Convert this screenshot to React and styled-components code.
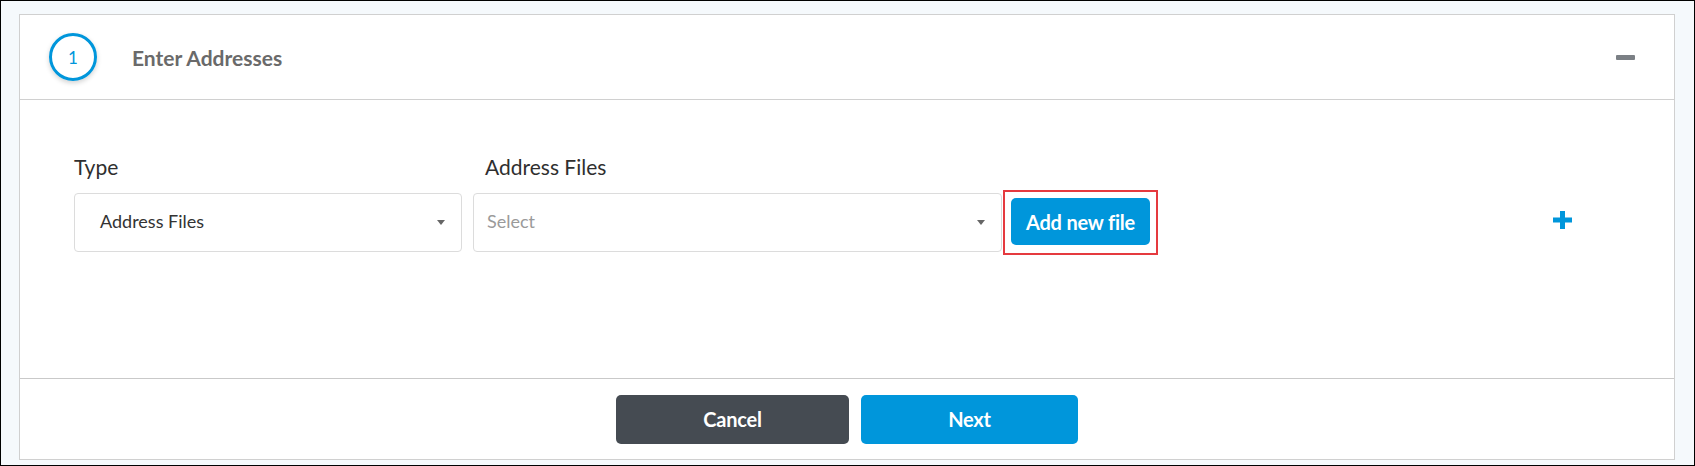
import styled, { createGlobalStyle } from "styled-components";

const GlobalStyle = createGlobalStyle`
  html, body {
    margin: 0;
    padding: 0;
    background: #f5f9fc;
  }
  body {
    font-family: Lato, "Open Sans", "Liberation Sans", sans-serif;
  }
  * {
    box-sizing: border-box;
  }
`;

const Page = styled.div`
  width: 1695px;
  height: 466px;
  border: 1px solid #000;
  background: #f5f9fc;
  padding: 13px 19px 5px 18px;
`;

const Card = styled.section`
  height: 100%;
  background: #fff;
  border: 1px solid #d0d0d0;
  display: flex;
  flex-direction: column;
`;

const Header = styled.header`
  height: 85px;
  flex: none;
  display: flex;
  align-items: center;
  padding: 0 39px 0 29px;
  border-bottom: 1px solid #d0d0d0;
`;

const StepBadge = styled.div`
  width: 48px;
  height: 48px;
  border-radius: 50%;
  border: 3px solid #0096db;
  box-shadow: 0 2px 5px rgba(0, 0, 0, 0.18);
  display: flex;
  align-items: center;
  justify-content: center;
  color: #0096db;
  font-size: 17px;
  font-weight: 400;
`;

const Title = styled.h2`
  margin: 0 0 0 35px;
  font-size: 21px;
  font-weight: 700;
  color: #6a6a6a;
  flex: 1;
`;

const Collapse = styled.button`
  border: none;
  background: none;
  padding: 0;
  width: 19px;
  height: 19px;
  display: flex;
  align-items: center;

  &::before {
    content: "";
    display: block;
    width: 19px;
    height: 5px;
    border-radius: 1px;
    background: #7b8085;
  }
`;

const Body = styled.div`
  flex: 1;
  padding: 55px 102px 0 54px;
`;

const LabelRow = styled.div`
  display: flex;
  margin-bottom: 11px;
`;

const Label = styled.label`
  display: block;
  font-size: 21px;
  line-height: 24px;
  color: #2f2f2f;
  width: ${(p) => p.$width}px;
  padding-left: ${(p) => p.$indent || 0}px;
`;

const FieldRow = styled.div`
  display: flex;
  align-items: center;
  gap: 11px;
`;

const Select = styled.div`
  width: ${(p) => p.$width}px;
  height: 59px;
  border: 1px solid #dcdcdc;
  border-radius: 4px;
  background: #fff;
  display: flex;
  align-items: center;
  justify-content: space-between;
  padding: 0 16px 3px ${(p) => p.$pad}px;
  font-size: 18px;
  color: ${(p) => (p.$placeholder ? "#9a9a9a" : "#333")};
`;

const Caret = styled.span`
  width: 0;
  height: 0;
  margin-top: 3px;
  border-left: 4.5px solid transparent;
  border-right: 4.5px solid transparent;
  border-top: 5px solid #666;
`;

const Highlight = styled.div`
  margin-left: -10px;
  border: 2px solid #e53a3f;
  padding: 6px 6px 8px 6px;
`;

const Button = styled.button`
  border: none;
  border-radius: 5px;
  height: ${(p) => p.$height}px;
  width: ${(p) => p.$width}px;
  padding: 0;
  background: ${(p) => (p.$variant === "dark" ? "#454b52" : "#0096db")};
  color: #fff;
  font-family: inherit;
  font-size: 20px;
  font-weight: 700;
  letter-spacing: -0.2px;
  cursor: pointer;
`;

const AddRow = styled.button`
  margin-left: auto;
  border: none;
  background: none;
  padding: 0;
  display: flex;
  margin-top: -6px;
`;

const Footer = styled.footer`
  height: 81px;
  flex: none;
  border-top: 1px solid #c9c9c9;
  display: flex;
  align-items: center;
  justify-content: center;
  gap: 12px;
`;

const PlusIcon = () => (
  <svg width="19" height="18" viewBox="0 0 19 18">
    <rect x="7" y="0" width="5" height="18" fill="#0096db" />
    <rect x="0" y="6.5" width="19" height="5" fill="#0096db" />
  </svg>
);

export default function App() {
  return (
    <>
      <GlobalStyle />
      <Page>
        <Card>
          <Header>
            <StepBadge>1</StepBadge>
            <Title>Enter Addresses</Title>
            <Collapse aria-label="Collapse" />
          </Header>
          <Body>
            <LabelRow>
              <Label $width={399}>Type</Label>
              <Label $width={541} $indent={12}>
                Address Files
              </Label>
            </LabelRow>
            <FieldRow>
              <Select $width={388} $pad={25}>
                Address Files
                <Caret />
              </Select>
              <Select $width={529} $pad={13} $placeholder>
                Select
                <Caret />
              </Select>
              <Highlight>
                <Button $width={139} $height={47}>
                  Add new file
                </Button>
              </Highlight>
              <AddRow aria-label="Add row">
                <PlusIcon />
              </AddRow>
            </FieldRow>
          </Body>
          <Footer>
            <Button $variant="dark" $width={233} $height={49}>
              Cancel
            </Button>
            <Button $width={217} $height={49}>
              Next
            </Button>
          </Footer>
        </Card>
      </Page>
    </>
  );
}
